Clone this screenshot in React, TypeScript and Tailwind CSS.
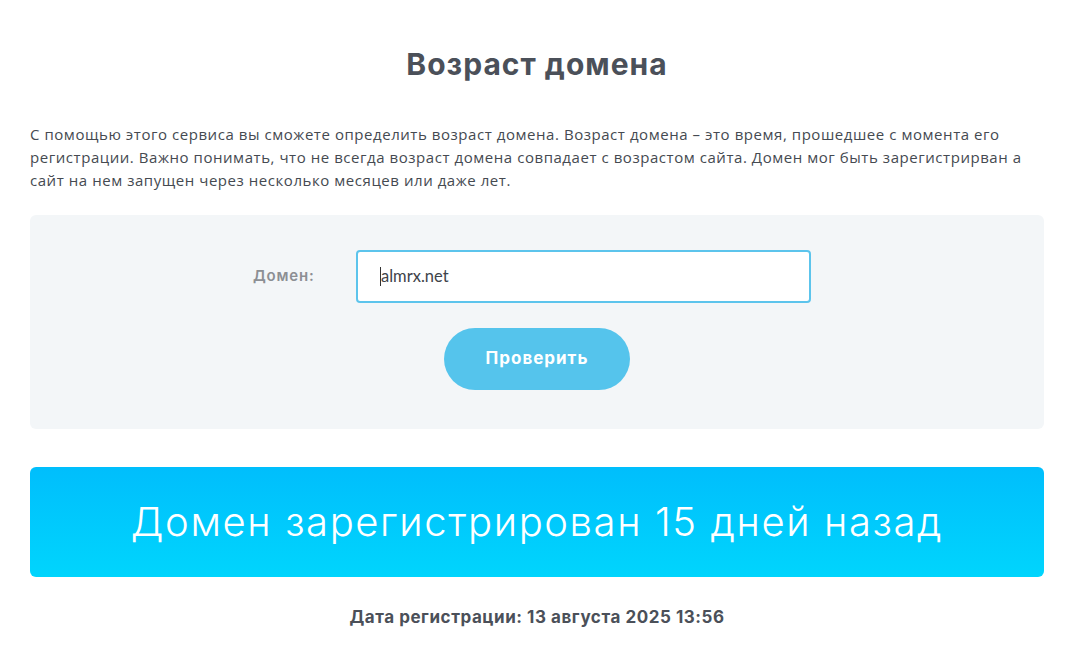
export default function App() {
  return (
    <div className="min-h-screen bg-white pl-[30px] pr-[44px] pt-[44px] font-['Open_Sans',sans-serif] text-[#464b52]">
      <h1 className="text-center font-['Inter',sans-serif] text-[30px] font-bold leading-[40px] tracking-[1px] text-[#4b5059]">
        Возраст домена
      </h1>

      <p className="mt-[39px] text-[15px] leading-[23px] tracking-[0.55px] text-[#454a51]">
        С помощью этого сервиса вы сможете определить возраст домена. Возраст домена – это время, прошедшее с момента его
        <br />
        регистрации. Важно понимать, что не всегда возраст домена совпадает с возрастом сайта. Домен мог быть зарегистрирван а
        <br />
        сайт на нем запущен через несколько месяцев или даже лет.
      </p>

      <div className="mt-[23px] flex h-[214px] flex-col items-center rounded-md bg-[#f3f6f8] pt-[35px]">
        <div className="mr-[10px] flex items-center">
          <label className="w-[103px] font-['Inter',sans-serif] text-[15px] font-semibold tracking-[0.8px] text-[#8c8f94]">
            Домен:
          </label>
          <div className="flex h-[53px] w-[455px] items-center rounded-[4px] border-2 border-[#5cc4ec] bg-white pl-[22px] font-['Lato',sans-serif] text-[16.5px] text-[#3e434a]">
            <span className="h-[19px] w-px bg-[#333]" />
            <span>almrx.net</span>
          </div>
        </div>
        <button className="mt-[25px] h-[62px] w-[186px] rounded-full bg-[#55c4ec] font-['Inter',sans-serif] text-[17px] font-bold tracking-[1px] text-white">
          Проверить
        </button>
      </div>

      <div className="mt-[38px] flex h-[110px] items-center justify-center rounded-md bg-gradient-to-b from-[#00befc] to-[#00d5fd]">
        <span className="font-['Inter',sans-serif] text-[40px] font-light tracking-[1.6px] text-white">
          Домен зарегистрирован 15 дней назад
        </span>
      </div>

      <p className="mt-[28px] text-center font-['Inter',sans-serif] text-[17px] font-bold tracking-[0.55px] text-[#4b5059]">
        Дата регистрации: 13 августа 2025 13:56
      </p>
    </div>
  );
}
